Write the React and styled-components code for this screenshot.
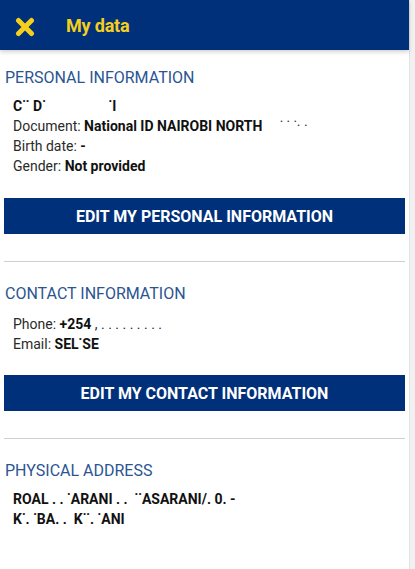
import React from 'react';
import styled, { createGlobalStyle } from 'styled-components';

const GlobalStyle = createGlobalStyle`
  html, body {
    margin: 0;
    padding: 0;
    background: #f1f1f1;
    font-family: Roboto, 'Noto Sans', Arial, sans-serif;
  }
`;

const Page = styled.div`
  width: 410px;
  min-height: 569px;
  background: #ffffff;
  border-right: 1px solid #e2e2e2;
  box-sizing: border-box;
`;

const Header = styled.header`
  height: 50px;
  background: #00307a;
  display: flex;
  align-items: center;
  padding-left: 15px;
  box-shadow: 0 2px 4px rgba(0, 0, 0, 0.18);
  position: relative;
`;

const CloseButton = styled.button`
  border: 0;
  background: none;
  padding: 0;
  width: 20px;
  height: 20px;
  display: flex;
  align-items: center;
  justify-content: center;
  margin-right: 31px;
  margin-top: 3px;
`;

const Title = styled.h1`
  margin: 0;
  font-size: 18px;
  font-weight: 700;
  color: #f5cf1c;
  letter-spacing: -0.2px;
`;

const Section = styled.section`
  padding: ${p => p.$top}px 4px 0 4px;
`;

const SectionTitle = styled.h2`
  margin: 0 0 0 1px;
  font-size: 16px;
  line-height: 20px;
  font-weight: 400;
  color: #2b5591;
`;

const DetailList = styled.div`
  margin-top: ${p => p.$gap || 8}px;
  padding-left: 9px;
`;

const Detail = styled.div`
  font-size: 14px;
  line-height: 20px;
  color: #2a2a2a;
  white-space: pre;
  b {
    font-weight: 700;
    color: #111;
  }
`;

const EditButton = styled.button`
  display: block;
  width: 100%;
  height: 36px;
  margin-top: ${p => p.$gap}px;
  border: 0;
  background: #00307a;
  color: #ffffff;
  font-family: Roboto, Arial, sans-serif;
  font-size: 16px;
  font-weight: 700;
  letter-spacing: 0;
`;

const Divider = styled.hr`
  margin: 27px 0 0 0;
  border: 0;
  border-top: 1px solid #cfcfcf;
`;

const CloseIcon = () => (
  <svg width="20" height="20" viewBox="0 0 20 20">
    <path d="M3.5 3.5 L16.5 16.5 M16.5 3.5 L3.5 16.5" stroke="#f5cf1c" strokeWidth="5" strokeLinecap="round" />
  </svg>
);

export default function App() {
  return (
    <>
      <GlobalStyle />
      <Page>
        <Header>
          <CloseButton aria-label="close">
            <CloseIcon />
          </CloseButton>
          <Title>My data</Title>
        </Header>

        <Section $top={18}>
          <SectionTitle>PERSONAL INFORMATION</SectionTitle>
          <DetailList>
            <Detail><b>{'C\u02D9\u02D9 D\u02D9                  \u02D9I'}</b></Detail>
            <Detail>Document: <b>National ID NAIROBI NORTH</b>{'     \u02D9 \u02D9 \u02D9\u00B7 \u00B7'}</Detail>
            <Detail>Birth date: <b>-</b></Detail>
            <Detail>Gender: <b>Not provided</b></Detail>
          </DetailList>
          <EditButton $gap={22}>EDIT MY PERSONAL INFORMATION</EditButton>
          <Divider />
        </Section>

        <Section $top={22}>
          <SectionTitle>CONTACT INFORMATION</SectionTitle>
          <DetailList $gap={10}>
            <Detail>Phone: <b>+254</b>{' , . . . . . . . . .'}</Detail>
            <Detail>Email: <b>SEL{'\u02D9'}SE</b></Detail>
          </DetailList>
          <EditButton $gap={21}>EDIT MY CONTACT INFORMATION</EditButton>
          <Divider />
        </Section>

        <Section $top={22}>
          <SectionTitle>PHYSICAL ADDRESS</SectionTitle>
          <DetailList>
            <Detail><b>{'ROAL . . \u02D9ARANI . .  \u02D9\u02D9ASARANI/. 0. -'}</b></Detail>
            <Detail><b>{'K\u02D9. \u02D9BA. .  K\u02D9\u02D9. \u02D9ANI'}</b></Detail>
          </DetailList>
        </Section>
      </Page>
    </>
  );
}
